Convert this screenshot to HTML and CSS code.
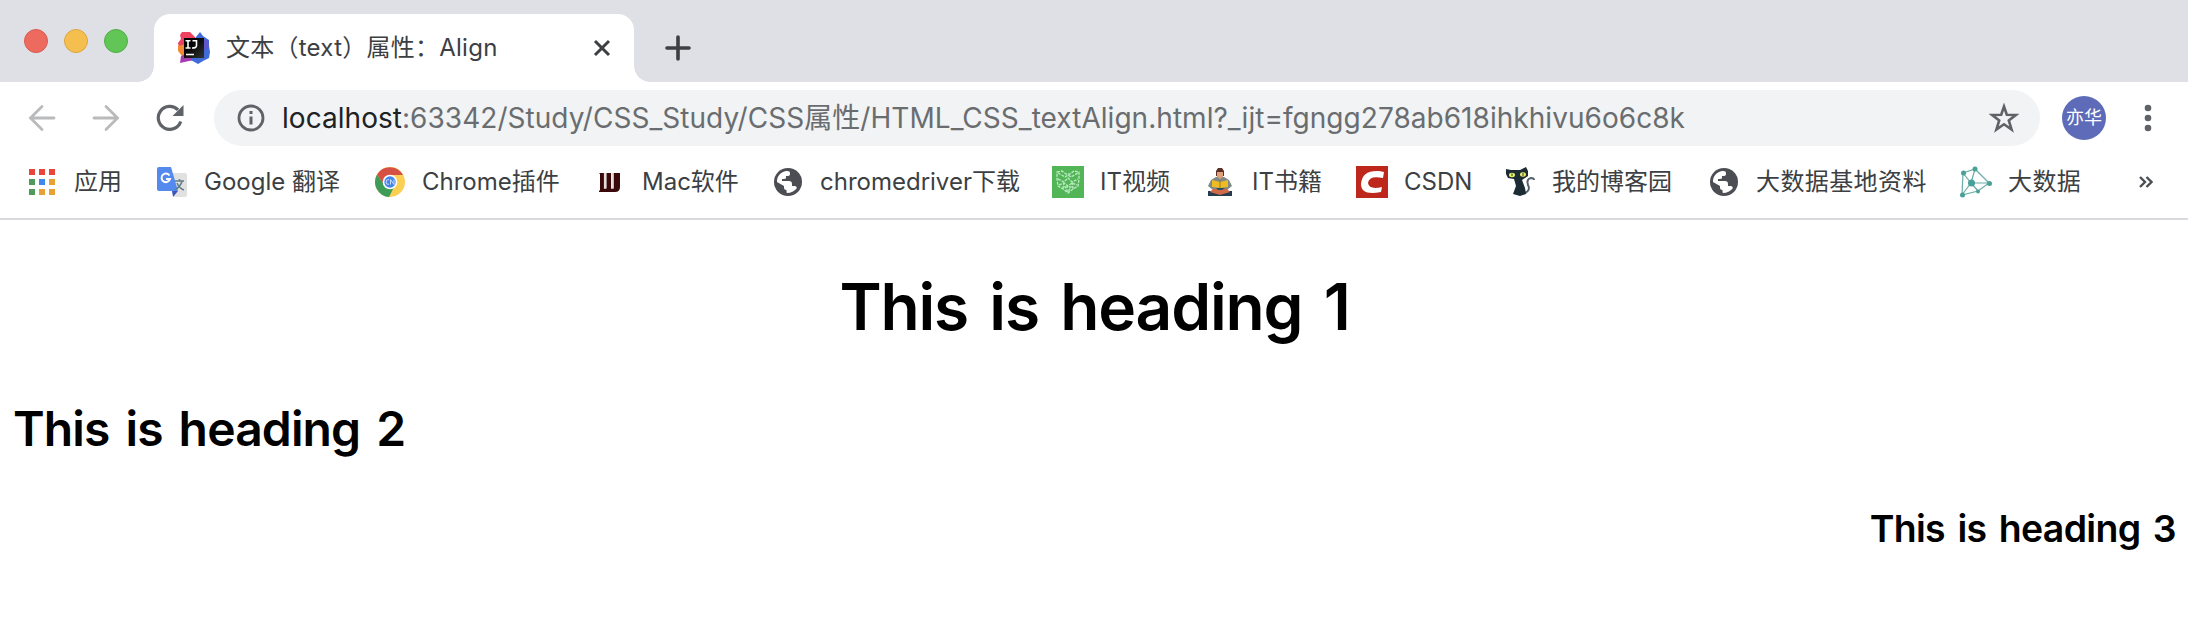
FILE: index.html
```html
<!DOCTYPE html>
<html lang="zh-CN">
<head>
<meta charset="utf-8">
<title>文本（text）属性：Align</title>
<link rel="stylesheet" href="styles.css">
</head>
<body>
<svg class="defs" width="0" height="0">
  <symbol id="globe" viewBox="0 0 32 32">
    <circle cx="16" cy="16" r="14" fill="#4d4e54"/>
    <path d="M5 15C5 10 9 6 14 5Q18 4.500 18 7V8Q18 10 15 10H14V12Q14 13 12 13H10V15H17Q20 15 20 18V20H23Q24 20 25 22Q21 27 15 27Q14.500 27 14.500 25V24Q12 24 12 22V20L5 16Z" fill="#fff"/>
  </symbol>
</svg>
<div class="tabstrip">
  <div class="lights"><i class="red"></i><i class="yellow"></i><i class="green"></i></div>
  <div class="tab">
    <svg class="favicon" width="32" height="32" viewBox="0 0 32 32">
      <defs><linearGradient id="blk" x2="1" y2="1"><stop offset=".3" stop-color="#000"/><stop offset="1" stop-color="#333"/></linearGradient></defs>
      <path d="M4 0H12L18 6L12 16L1 16L0 11L3 7L2 3Z" fill="#ee4260"/>
      <path d="M0 14L8 12L10 24L4 24L0 19Z" fill="#f58a35"/>
      <path d="M3 24L12 20L18 28L11 29L2 31Z" fill="#a63cb3"/>
      <path d="M18 5L22 0L25 4L31 8V14L32 20L31 26L25 29L20 32L13 28L16 20Z" fill="#406bd9"/>
      <path d="M23 6L30 9L31 15L25 19Z" fill="#6156cb"/>
      <path d="M6 6H26V26H6Z" fill="url(#blk)"/>
      <path d="M7.500 8.800H12.500M10 8.800V16M7.500 16H12.500M14.500 8.800H18.500V13.500Q18.500 16.200 14 16M8 22.500H16" fill="none" stroke="#fff" stroke-width="1.600"/>
    </svg>
    <span class="tab-title">文本（text）属性：Align</span>
    <svg class="close" width="18" height="18" viewBox="0 0 18 18"><path d="M2 2L16 16M16 2L2 16" stroke="#3c4043" stroke-width="3" fill="none"/></svg>
  </div>
  <svg class="plus" width="26" height="26" viewBox="0 0 26 26"><path d="M13 2V24M2 13H24" stroke="#3c4043" stroke-width="3.600" stroke-linecap="round"/></svg>
</div>
<div class="toolbar">
  <svg class="nav" width="28" height="28" viewBox="0 0 28 28"><path d="M14 2.500L2.500 14L14 25.500M3 14H26" fill="none" stroke="#b9babc" stroke-width="2.800" stroke-linecap="round"/></svg>
  <svg class="nav" width="28" height="28" viewBox="0 0 28 28"><path d="M14 2.500L25.500 14L14 25.500M25 14H2" fill="none" stroke="#b9babc" stroke-width="2.800" stroke-linecap="round"/></svg>
  <svg class="nav" width="28" height="28" viewBox="0 0 28 28"><path d="M24.700 17.500A11.500 11.500 0 1 1 22 5.800" fill="none" stroke="#5f6368" stroke-width="3.200"/><path d="M27.500 1V12H16.500Z" fill="#5f6368"/></svg>
  <div class="address">
    <svg width="28" height="28" viewBox="0 0 28 28"><circle cx="14" cy="14" r="12" fill="none" stroke="#5f6368" stroke-width="2.800"/><path d="M14 7V10M14 12.500V20.500" stroke="#5f6368" stroke-width="3"/></svg>
    <span class="url"><b>localhost</b>:63342/Study/CSS_Study/CSS属性/HTML_CSS_textAlign.html?_ijt=fgngg278ab618ihkhivu6o6c8k</span>
    <svg class="star" width="30" height="30" viewBox="0 0 30 30"><path d="M15 3.500L17.800 11.700L27 11.900L19.800 17.400L22.600 26.500L15 21.300L7.400 26.500L10.200 17.400L3 11.900L12.200 11.700Z" fill="none" stroke="#5f6368" stroke-width="2.600"/></svg>
  </div>
  <div class="avatar">亦华</div>
  <svg class="menu" width="8" height="28" viewBox="0 0 8 28"><g fill="#5f6368"><circle cx="4" cy="4" r="3.300"/><circle cx="4" cy="14" r="3.300"/><circle cx="4" cy="24" r="3.300"/></g></svg>
</div>
<div class="bookmarks">
  <div class="bm"><svg viewBox="0 0 32 32"><path d="M3 3h6v6H3zM13 3h6v6h-6zM23 3h6v6h-6z" fill="#e8463d"/><path d="M3 13h6v6H3zM3 23h6v6H3z" fill="#4f9a5c"/><path d="M13 13h6v6h-6z" fill="#3f88ee"/><path d="M23 13h6v6h-6zM13 23h6v6h-6zM23 23h6v6h-6z" fill="#e6a235"/></svg><span>应用</span></div>
  <div class="bm"><svg viewBox="0 0 32 32"><path d="M14 7H29Q31 7 31 9V29Q31 31 29 31H18Z" fill="#e1e1e1"/><path d="M16 25H22L17 31Z" fill="#3a53bd"/><path d="M3 1H15L22 25H3Q1 25 1 23V3Q1 1 3 1Z" fill="#5489ed"/><path d="M13.500 9.500A4.300 4.300 0 1 0 14 13H10" fill="none" stroke="#fff" stroke-width="2"/><path d="M19 15H28M23.500 13V15M26 15Q25 20 19 24M21 17Q23 22 28 24" fill="none" stroke="#607d8b" stroke-width="1.500"/></svg><span>Google 翻译</span></div>
  <div class="bm"><svg viewBox="0 0 32 32"><circle cx="16" cy="16" r="15" fill="#fbce54"/><path d="M3 8.500A15 15 0 0 0 15 31L20 21L10 18Z" fill="#3f9b58"/><path d="M3 8.500A15 15 0 0 1 29 9H16L9 17Z" fill="#d75044"/><circle cx="16" cy="16" r="7.300" fill="#fff"/><circle cx="16" cy="16" r="5.700" fill="#4385ed"/><path d="M15 13.700Q12 13 12 16T15 18.300M16.500 18.500V13.500L20 18.500V13.500" fill="none" stroke="#c7dcff" stroke-width="1"/></svg><span>Chrome插件</span></div>
  <div class="bm"><svg viewBox="0 0 32 32"><path d="M5 7H10V22.500H12.500V7H17V22.500H19.500V7H26V21Q26 26 21 26H5V25L6 24V8Z" fill="#3b0909"/><path d="M11 7V22.500M18.500 7V22.500" stroke="#e6dada" stroke-width="2.200"/></svg><span>Mac软件</span></div>
  <div class="bm"><svg><use href="#globe"/></svg><span>chromedriver下载</span></div>
  <div class="bm"><svg viewBox="0 0 32 32"><path d="M0 0H32V32H0Z" fill="#52b556"/><path d="M5 6L10 5L14 8H18L22 5L27 6V13L26 20L21 23L16 27L11 23L6 20L5 13ZM6 7L13 11L16 9L19 11L26 7M6 13L12 16L16 12L20 16L26 13M7 19L12 17L16 20L20 17L25 19M12 16L11 23M20 16L21 23M13 21H19L16 26Z" fill="none" stroke="#b5e8bd" stroke-width="1.400" stroke-dasharray="3 1"/></svg><span>IT视频</span></div>
  <div class="bm"><svg viewBox="0 0 32 32"><path d="M4 25H28V30H4Z" fill="#263d50"/><path d="M7 14L12 11H20L25 14L28 20L23 24H9L4 20Z" fill="#7d8a86"/><path d="M12 5L14 2H18L20 5V10H12Z" fill="#5b3027"/><path d="M13 6H19V11L16 13L13 11Z" fill="#e1a078"/><path d="M8 14L16 16L24 14V21L16 22L8 21Z" fill="#efbb25"/><path d="M16 14V22" stroke="#9a7a22"/><path d="M9 23H23L26 26L16 29L6 26Z" fill="#cf6947"/><path d="M12 22H21L18 24H14Z" fill="#284d60"/></svg><span>IT书籍</span></div>
  <div class="bm"><svg viewBox="0 0 32 32"><path d="M0 0H32V32H0Z" fill="#bd271c"/><path d="M28 6L27 12Q13 9 12 17Q13 24 26 21L25 26Q5 30 5 18Q6 4 23 5Z" fill="#fff"/></svg><span>CSDN</span></div>
  <div class="bm"><svg viewBox="0 0 32 32"><path d="M21 27Q27 24 24 19Q22 13 27 12Q30 12 30 14" fill="none" stroke="#536168" stroke-width="2"/><path d="M2 3L7 4H16L22 1L24 5V10L18 14L21 22L22 28L16 30L9 28L12 20L10 13L4 12L2 8Z" fill="#1d2b34"/><ellipse cx="8" cy="9" rx="3" ry="2.200" fill="#e8ef68"/><ellipse cx="19" cy="8.500" rx="3" ry="2.200" fill="#e8ef68"/><path d="M8 7.500V10M19 7V10" stroke="#32402e" stroke-width="1"/></svg><span>我的博客园</span></div>
  <div class="bm"><svg><use href="#globe"/></svg><span class="wide">大数据基地资料</span></div>
  <div class="bm"><svg viewBox="0 0 32 32"><g fill="none" stroke="#67ada5" stroke-width="1.200"><path d="M3 7L15 3L29 17L18 25L2 29ZM3 7L11 17L15 3M11 17H29M11 17L2 29M11 17L18 25"/></g><g fill="#48a197"><circle cx="3.500" cy="7" r="2.500"/><circle cx="15" cy="3" r="2.500"/><circle cx="29.500" cy="17.500" r="2.500"/><circle cx="18" cy="25.500" r="2"/><circle cx="2.500" cy="29" r="2.500"/><circle cx="11.500" cy="17" r="3.500"/></g></svg><span class="wide">大数据</span></div>
  <svg class="more" width="14" height="14" viewBox="0 0 14 14"><path d="M1 2L6 7L1 12M7.500 2L12.500 7L7.500 12" fill="none" stroke="#4b4f54" stroke-width="2.400"/></svg>
</div>
<main>
  <h1>This is heading 1</h1>
  <h2>This is heading 2</h2>
  <h3>This is heading 3</h3>
</main>
</body>
</html>
```
FILE: styles.css
```css
* { box-sizing: border-box; }
body { margin: 0; height: 620px; overflow: hidden; background: #fff; font-family: Inter, "Noto Sans CJK SC", sans-serif; color: #3c4043; }
svg { display: block; flex: none; }
.defs { position: absolute; }
.tabstrip { height: 82px; background: #dfe0e6; display: flex; }
.lights { display: flex; gap: 16px; padding: 29px 0 0 24px; width: 154px; }
.lights i { width: 24px; height: 24px; border-radius: 50%; }
.red { background: #ed6a5f; border: 1px solid #d9594f; }
.yellow { background: #f5bf4f; border: 1px solid #dca73e; }
.green { background: #61c655; border: 1px solid #4fae43; }
.tab { position: relative; width: 480px; height: 68px; margin-top: 14px; background: #fff; border-radius: 16px 16px 0 0; display: flex; align-items: center; padding: 0 23px 0 24px; }
.tab::before, .tab::after { content: ""; position: absolute; bottom: 0; width: 16px; height: 16px; }
.tab::before { left: -16px; background: radial-gradient(circle at 0 0, transparent 15.5px, #fff 16px); }
.tab::after { right: -16px; background: radial-gradient(circle at 100% 0, transparent 15.5px, #fff 16px); }
.tab-title { margin-left: 16px; font-size: 24px; line-height: 32px; white-space: nowrap; letter-spacing: .25px; }
.close { margin-left: auto; }
.plus { margin: 35px 0 0 31px; }
.toolbar { height: 72px; display: flex; align-items: center; padding-left: 28px; }
.nav { margin-right: 36px; }
.nav:nth-child(3) { margin-right: 30px; }
.address { width: 1826px; height: 56px; border-radius: 28px; background: #f1f3f4; display: flex; align-items: center; padding: 0 21px 0 23px; }
.url { margin-left: 17px; font-size: 28px; line-height: 40px; color: #6a6d70; white-space: nowrap; letter-spacing: .04px; }
.url b { color: #202124; font-weight: 400; }
.star { margin-left: auto; }
.avatar { width: 44px; height: 44px; margin-left: 22px; border-radius: 50%; background: #5d6bb9; color: #fff; font-size: 18px; line-height: 44px; text-align: center; }
.menu { margin-left: 38px; }
.bookmarks { height: 66px; border-bottom: 2px solid #d9dade; padding: 8px 0 0 26px; display: grid; grid-template-columns: 130px 218px 220px 178px 280px 152px 152px 148px 204px 252px 179px 14px; }
.bm { display: flex; align-items: center; height: 40px; }
.bm svg { width: 32px; height: 32px; }
.bm span { margin-left: 16px; font-size: 24px; line-height: 36px; white-space: nowrap; }
.bm .wide { letter-spacing: .4px; }
.more { margin-top: 13px; }
main { color: #000; padding: 0 12px 0 13px; }
h1, h2, h3 { margin: 0; font-weight: 600; white-space: nowrap; letter-spacing: -.018em; word-spacing: .098em; }
h1 { font-size: 64px; line-height: 78px; padding-top: 48px; text-align: center; }
h2 { font-size: 48px; line-height: 58px; padding-top: 54px; }
h3 { font-size: 37.44px; line-height: 46px; padding-top: 48px; text-align: right; }
```
